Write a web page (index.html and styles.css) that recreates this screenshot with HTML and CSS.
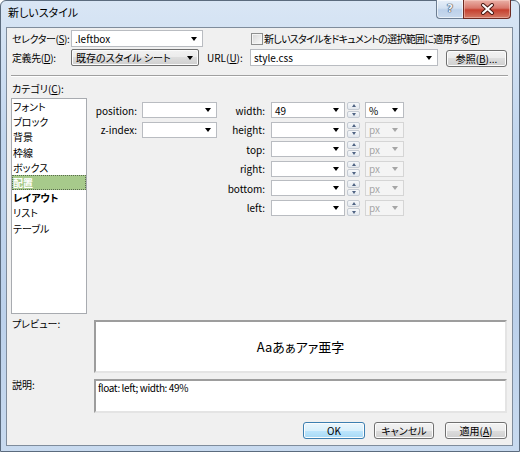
FILE: index.html
```html
<!DOCTYPE HTML><html>
<head>
  <title>新しいスタイル</title>
  <meta name="viewport" content="width=device-width, initial-scale=1">
  <link rel="stylesheet" href="styles.css">
</head>
<body>
  <div class="window">
    <div class="titlebar">
      <span class="title">新しいスタイル</span>
      <div class="caption">
        <span class="cap-help">?</span>
        <span class="cap-close">
          <svg width="15" height="12" viewBox="0 0 15 12">
            <path d="M3 2 L12 10 M12 2 L3 10" stroke="#4a1a14" stroke-width="4" stroke-linecap="round"/>
            <path d="M3 2 L12 10 M12 2 L3 10" stroke="#fff" stroke-width="2" stroke-linecap="round"/>
          </svg>
        </span>
      </div>
    </div>

    <div class="client">
      <div class="row row-1">
        <span class="lbl">セレクター(<u>S</u>):</span>
        <div class="combo w-selector"><span class="val">.leftbox</span><span class="arrow"></span></div>
        <span class="check"><span class="box"></span><span class="check-text">新しいスタイルをドキュメントの選択範囲に適用する(<u>P</u>)</span></span>
      </div>
      <div class="row row-2">
        <span class="lbl">定義先(<u>D</u>):</span>
        <div class="combo dd w-target"><span class="val">既存のスタイル シート</span><span class="arrow"></span></div>
        <span class="lbl-url">URL(<u>U</u>):</span>
        <div class="combo w-url"><span class="val">style.css</span><span class="arrow"></span></div>
        <span class="btn w-browse">参照(<u>B</u>)...</span>
      </div>

      <div class="sep"></div>

      <div class="cat-lbl">カテゴリ(<u>C</u>):</div>
      <div class="middle">
        <div class="list">
          <div class="item">フォント</div>
          <div class="item">ブロック</div>
          <div class="item">背景</div>
          <div class="item">枠線</div>
          <div class="item">ボックス</div>
          <div class="item selected">配置</div>
          <div class="item bold">レイアウト</div>
          <div class="item">リスト</div>
          <div class="item">テーブル</div>
        </div>

        <div class="props">
          <div class="grid-l">
            <span class="plbl">position:</span>
            <div class="combo"><span class="val"></span><span class="arrow"></span></div>
            <span class="plbl">z-index:</span>
            <div class="combo"><span class="val"></span><span class="arrow"></span></div>
          </div>
          <div class="grid-r">
            <span class="plbl">width:</span>
            <div class="combo"><span class="val">49</span><span class="arrow"></span></div>
            <div class="spin"><span class="up"></span><span class="down"></span></div>
            <div class="combo unit"><span class="val">%</span><span class="arrow"></span></div>

            <span class="plbl">height:</span>
            <div class="combo"><span class="val"></span><span class="arrow"></span></div>
            <div class="spin"><span class="up"></span><span class="down"></span></div>
            <div class="combo unit off"><span class="val">px</span><span class="arrow"></span></div>

            <span class="plbl">top:</span>
            <div class="combo"><span class="val"></span><span class="arrow"></span></div>
            <div class="spin"><span class="up"></span><span class="down"></span></div>
            <div class="combo unit off"><span class="val">px</span><span class="arrow"></span></div>

            <span class="plbl">right:</span>
            <div class="combo"><span class="val"></span><span class="arrow"></span></div>
            <div class="spin"><span class="up"></span><span class="down"></span></div>
            <div class="combo unit off"><span class="val">px</span><span class="arrow"></span></div>

            <span class="plbl">bottom:</span>
            <div class="combo"><span class="val"></span><span class="arrow"></span></div>
            <div class="spin"><span class="up"></span><span class="down"></span></div>
            <div class="combo unit off"><span class="val">px</span><span class="arrow"></span></div>

            <span class="plbl">left:</span>
            <div class="combo"><span class="val"></span><span class="arrow"></span></div>
            <div class="spin"><span class="up"></span><span class="down"></span></div>
            <div class="combo unit off"><span class="val">px</span><span class="arrow"></span></div>
          </div>
        </div>
      </div>

      <div class="box-row preview-row">
        <span class="box-lbl">プレビュー:</span>
        <div class="sunken preview">Aaあぁアァ亜字</div>
      </div>
      <div class="box-row desc-row">
        <span class="box-lbl">説明:</span>
        <div class="sunken desc">float: left; width: 49%</div>
      </div>

      <div class="buttons">
        <span class="btn default w-ok">OK</span>
        <span class="btn w-cancel">キャンセル</span>
        <span class="btn w-apply">適用(<u>A</u>)</span>
      </div>
    </div>
  </div>
</body>
</html>
```

FILE: styles.css
```css
body {
  margin: 0;
  font-family: "Noto Sans CJK JP", sans-serif;
  font-size: 10px;
  font-feature-settings: "palt";
  color: #000;
  white-space: nowrap;
}
u {
  text-decoration: underline;
  text-underline-offset: 1px;
}

/* window frame */
.window {
  width: 520px;
  height: 452px;
  box-sizing: border-box;
  border: 1px solid #5b6b7e;
  border-radius: 6px 6px 0 0;
  padding: 0 6px 5px 5px;
  background: linear-gradient(#d9e6f5, #c2d6ee 30%, #bcd1eb 70%, #c8daef);
  display: flex;
  flex-direction: column;
}
.titlebar {
  height: 26px;
  display: flex;
  align-items: flex-start;
  padding-left: 2px;
}
.title {
  font-size: 11px;
  line-height: 23px;
  color: #000;
}
.caption {
  margin-left: auto;
  margin-right: 2px;
  display: flex;
  margin-top: -1px;
}
.cap-help {
  box-sizing: border-box;
  width: 27px;
  height: 19px;
  border: 1px solid #6c7d92;
  border-top: none;
  border-right: none;
  border-radius: 0 0 0 4px;
  background: linear-gradient(#e6eff9, #d3e1f1 45%, #bcd0e9 55%, #c9daee);
  box-shadow: inset 0 0 0 1px rgba(255,255,255,.6);
  color: #eef3fa;
  font-family: "DejaVu Sans", sans-serif;
  font-weight: bold;
  font-size: 11px;
  line-height: 18px;
  text-align: center;
  text-shadow: 0 0 1px #2d3b4d, 0 0 1px #2d3b4d, 0 0 1px #2d3b4d;
}
.cap-close {
  box-sizing: border-box;
  width: 48px;
  height: 19px;
  border: 1px solid #6e2a22;
  border-top: none;
  border-radius: 0 0 4px 0;
  background: linear-gradient(#eab2a8, #d8776b 45%, #c6402f 55%, #d37a66);
  box-shadow: inset 0 0 0 1px rgba(255,220,210,.45);
  display: flex;
  align-items: center;
  justify-content: center;
}

/* client area */
.client {
  flex: 1;
  background: #f0f0f0;
  border: 1px solid #7f8c9c;
  display: flex;
  flex-direction: column;
}
.row {
  display: flex;
  align-items: center;
  height: 17px;
  margin-left: 5px;
}
.row-1 { margin-top: 2px; }
.row-2 { margin-top: 2px; }
.lbl { width: 59px; letter-spacing: -0.4px; }
.lbl-url { width: 43px; margin-left: 8px; }

.combo {
  box-sizing: border-box;
  height: 17px;
  background: #fff;
  border: 1px solid #b9bcc1;
  display: flex;
  align-items: center;
  padding: 0 5px 0 3px;
  overflow: hidden;
}
.combo .val { flex: 1; }
.arrow {
  width: 0;
  height: 0;
  border-left: 3.5px solid transparent;
  border-right: 3.5px solid transparent;
  border-top: 4px solid #000;
}
.combo.dd {
  border: 1px solid #707070;
  border-radius: 2px;
  background: linear-gradient(#f2f2f2, #ebebeb 50%, #dddddd 50%, #cfcfcf);
  box-shadow: inset 0 0 0 1px #fbfbfb;
  padding-left: 4px;
}
.w-selector { width: 132px; }
.w-target { width: 128px; }
.w-url { width: 188px; }

.check {
  margin-left: 48px;
  display: flex;
  align-items: center;
  gap: 1px;
}
.check-text { letter-spacing: -0.7px; }
.check .box {
  box-sizing: border-box;
  width: 12px;
  height: 12px;
  border: 1px solid #8e8f8f;
  background: linear-gradient(135deg, #d6d6d6, #fbfbfb);
  box-shadow: inset 0 0 0 1px #f4f4f4;
}

.btn {
  box-sizing: border-box;
  height: 17px;
  border: 1px solid #707070;
  border-radius: 3px;
  background: linear-gradient(#f2f2f2, #ebebeb 50%, #dddddd 50%, #cfcfcf);
  box-shadow: inset 0 0 0 1px #fcfcfc;
  display: flex;
  align-items: center;
  justify-content: center;
}
.btn.default {
  border-color: #3c7fb1;
  background: linear-gradient(#eaf6fd, #d9f0fc 50%, #bee6fd 50%, #a7d9f5);
}
.w-browse { width: 61px; margin-left: 8px; margin-top: 1px; }

.sep {
  margin: 9px 4px 0 4px;
  border-top: 1px solid #a0a0a0;
  border-bottom: 1px solid #fff;
}
.cat-lbl {
  margin: 6px 0 0 5px;
  line-height: 12px;
}

.middle {
  display: flex;
  margin: 3px 0 0 4px;
}
.list {
  box-sizing: border-box;
  width: 76px;
  height: 216px;
  background: #fff;
  border: 1px solid #a8abb0;
}
.item {
  height: 15.2px;
  line-height: 15.2px;
  padding-left: 1px;
}
.item.bold { font-weight: bold; }
.item.selected {
  background: #a7ca8b;
  color: #fff;
  font-weight: bold;
  outline: 1px dotted #5a6a50;
  outline-offset: -1px;
}

.props {
  display: flex;
  margin-left: 7px;
  padding-top: 4px;
}
.grid-l, .grid-r {
  display: grid;
  grid-auto-rows: 16px;
  row-gap: 3.6px;
  align-items: center;
  align-content: start;
}
.grid-l { grid-template-columns: 48px 75px; }
.grid-r { grid-template-columns: 54px 74px 15px 44px; }
.grid-l .combo, .grid-r .combo { height: 16px; }
.plbl {
  text-align: right;
  padding-right: 5px;
}
.grid-r .plbl { padding-right: 6px; }

.spin {
  box-sizing: border-box;
  width: 13px;
  height: 16px;
  margin-left: 2px;
  display: flex;
  flex-direction: column;
  gap: 1px;
}
.spin span {
  flex: 1;
  border: 1px solid #c5cbd3;
  border-radius: 2px;
  background: linear-gradient(#f6f8fa, #e3e8ee);
  display: flex;
  align-items: center;
  justify-content: center;
}
.spin .up::after {
  content: "";
  border-left: 2.5px solid transparent;
  border-right: 2.5px solid transparent;
  border-bottom: 3px solid #4f6383;
}
.spin .down::after {
  content: "";
  border-left: 2.5px solid transparent;
  border-right: 2.5px solid transparent;
  border-top: 3px solid #4f6383;
}
.combo.unit {
  width: 39px;
  margin-left: 5px;
}
.combo.unit.off {
  background: #f4f4f4;
  border-color: #d5d5d5;
  color: #a6a6a6;
}
.combo.unit.off .arrow { border-top-color: #a6a6a6; }

.box-row {
  display: flex;
  margin-left: 5px;
}
.preview-row { margin-top: 6px; }
.desc-row { margin-top: 6px; }
.box-lbl {
  width: 82px;
  line-height: 12px;
  margin-top: -2px;
}
.desc-row .box-lbl { margin-top: 0; }
.sunken {
  box-sizing: border-box;
  width: 413px;
  background: #fff;
  border: 2px solid;
  border-color: #9d9d9d #e4e4e4 #e4e4e4 #9d9d9d;
}
.preview {
  height: 53px;
  display: flex;
  align-items: center;
  justify-content: center;
  font-size: 13px;
}
.desc {
  height: 34px;
  padding: 1px 2px;
  line-height: 12px;
  letter-spacing: -0.4px;
}

.buttons {
  display: flex;
  justify-content: flex-end;
  margin: 9px 5px 0 0;
}
.w-ok { width: 62px; }
.w-cancel { width: 60px; margin-left: 9px; }
.w-apply { width: 62px; margin-left: 11px; }
```
